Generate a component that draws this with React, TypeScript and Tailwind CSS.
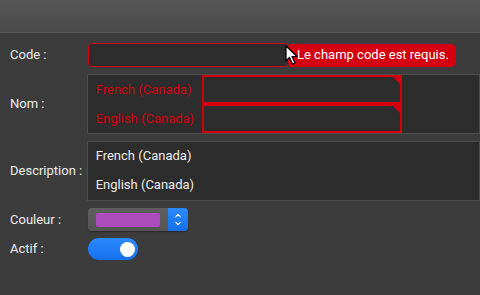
import { ChevronUp, ChevronDown } from "lucide-react";

const font = { fontFamily: "Roboto, 'Liberation Sans', sans-serif" };

function Corner() {
  return (
    <span className="absolute top-0 right-0 w-0 h-0 border-t-[7px] border-l-[7px] border-t-[#d4000f] border-l-transparent" />
  );
}

export default function App() {
  return (
    <div className="w-[480px] h-[295px] overflow-hidden bg-[#3c3c3c] text-[13px] text-[#ececec]" style={font}>
      {/* header bar */}
      <div className="h-[33px] bg-gradient-to-b from-[#575757] to-[#4a4a4a] border-b border-[#585858]" />

      <div className="flex flex-col gap-[7px] pt-[10px]">
        {/* Code */}
        <div className="flex items-center h-[24px]">
          <div className="w-[88px] pl-[10px]">Code :</div>
          <div className="relative flex items-center">
            <div className="w-[201px] h-[24px] rounded-[4px] border-[1.5px] border-[#d4000f] bg-[#2d2d2d]" />
            <div className="w-[167px] h-[23px] flex items-center pl-[8px] bg-[#d4000f] rounded-r-[5px] text-white text-[13px]">
              Le champ code est requis.
            </div>
            <svg className="absolute left-[197px] top-[2px]" width="14" height="21" viewBox="0 0 14 21">
              <path d="M1 1 L1 16 L4.5 12.5 L7.5 19 L10 18 L7 11.5 L12 11.5 Z" fill="#fff" stroke="#000" strokeWidth="1.2" strokeLinejoin="round" />
            </svg>
          </div>
        </div>

        {/* Nom */}
        <div className="flex items-center">
          <div className="w-[88px] pl-[10px]">Nom :</div>
          <div className="w-[400px] border border-[#4c4c4c] bg-[#2d2d2d] flex flex-col">
            <div className="flex items-center h-[29px]">
              <div className="w-[114px] pl-[8px] text-[#d4000f]">French (Canada)</div>
              <div className="relative w-[200px] h-[29px] border-2 border-[#d4000f] bg-[#2d2d2d]"><Corner /></div>
            </div>
            <div className="flex items-center h-[29px]">
              <div className="w-[114px] pl-[8px] text-[#d4000f]">English (Canada)</div>
              <div className="relative w-[200px] h-[29px] border-2 border-[#d4000f] bg-[#2d2d2d]"><Corner /></div>
            </div>
          </div>
        </div>

        {/* Description */}
        <div className="flex items-center">
          <div className="w-[88px] pl-[10px]">Description :</div>
          <div className="w-[400px] h-[60px] border border-[#4c4c4c] bg-[#2d2d2d] flex flex-col justify-center gap-[11px] pl-[8px]">
            <div className="leading-[18px] -mt-[2px]">French (Canada)</div>
            <div className="leading-[18px]">English (Canada)</div>
          </div>
        </div>

        {/* Couleur */}
        <div className="flex items-center h-[23px]">
          <div className="w-[88px] pl-[10px]">Couleur :</div>
          <div className="flex h-[23px] w-[100px] rounded-[4px] overflow-hidden shadow-[0_1px_1px_rgba(0,0,0,0.3)]">
            <div className="flex-1 bg-gradient-to-b from-[#5f5f5f] to-[#545454] flex items-center pl-[8px]">
              <div className="w-[64px] h-[14px] rounded-[2px] bg-[#ad4cbc]" />
            </div>
            <div className="w-[20px] bg-gradient-to-b from-[#2a8bff] to-[#1470e8] flex flex-col items-center justify-center text-white">
              <ChevronUp className="w-[12px] h-[9px] -mb-[1px]" strokeWidth={3} />
              <ChevronDown className="w-[12px] h-[9px]" strokeWidth={3} />
            </div>
          </div>
        </div>

        {/* Actif */}
        <div className="flex items-center h-[22px]">
          <div className="w-[88px] pl-[10px]">Actif :</div>
          <div className="w-[50px] h-[22px] rounded-full bg-gradient-to-b from-[#2b8bff] to-[#1570ea] flex items-center justify-end pr-[3px]">
            <div className="w-[15px] h-[15px] rounded-full bg-white" />
          </div>
        </div>
      </div>
    </div>
  );
}
